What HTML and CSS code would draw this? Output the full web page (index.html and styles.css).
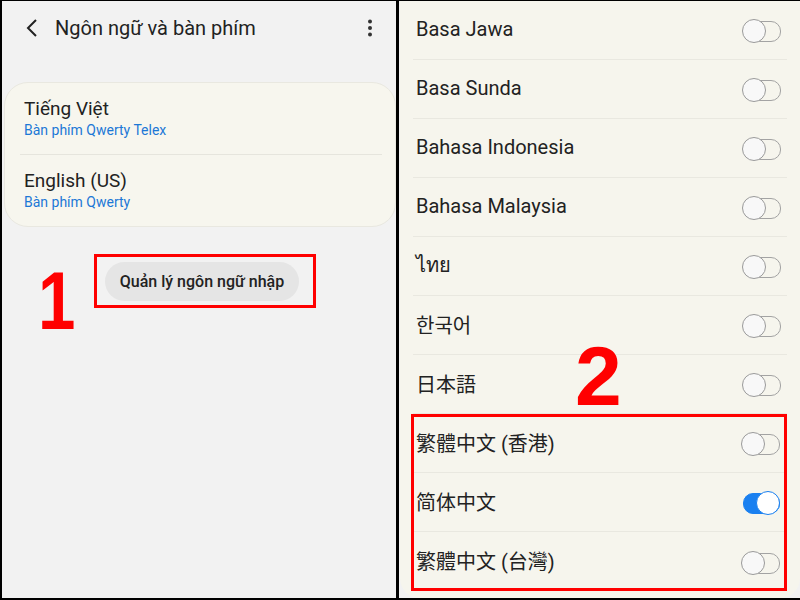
FILE: index.html
```html
<!DOCTYPE html>
<html lang="vi">

<head>
  <meta charset="UTF-8">
  <title>Ngôn ngữ và bàn phím</title>
  <link rel="stylesheet" href="styles.css">
</head>

<body>
  <div class="frame">
    <!--左边: 语言和键盘-->
    <div class="pane left">
      <div class="header">
        <svg class="back" width="12" height="20" viewBox="0 0 12 20">
          <path d="M10 2 L2 10 L10 18" fill="none" stroke="#222" stroke-width="2" />
        </svg>
        <span class="title">Ngôn ngữ và bàn phím</span>
        <svg class="more" width="6" height="18" viewBox="0 0 6 18">
          <circle cx="3" cy="2.5" r="2" fill="#333" />
          <circle cx="3" cy="9" r="2" fill="#333" />
          <circle cx="3" cy="15.5" r="2" fill="#333" />
        </svg>
      </div>
      <div class="card">
        <div class="item">
          <div class="name">Tiếng Việt</div>
          <div class="sub">Bàn phím Qwerty Telex</div>
        </div>
        <div class="item">
          <div class="name">English (US)</div>
          <div class="sub">Bàn phím Qwerty</div>
        </div>
      </div>
      <div class="step">
        <span class="num num1">1</span>
        <div class="mark">
          <span class="btn">Quản lý ngôn ngữ nhập</span>
        </div>
      </div>
    </div>

    <!--右边: 输入语言列表-->
    <div class="pane right">
      <div class="list">
        <div class="row"><span>Basa Jawa</span><i class="switch"></i></div>
        <div class="row"><span>Basa Sunda</span><i class="switch"></i></div>
        <div class="row"><span>Bahasa Indonesia</span><i class="switch"></i></div>
        <div class="row"><span>Bahasa Malaysia</span><i class="switch"></i></div>
        <div class="row"><span lang="th">ไทย</span><i class="switch"></i></div>
        <div class="row"><span lang="ko">한국어</span><i class="switch"></i></div>
        <div class="row"><span lang="ja">日本語</span><i class="switch"></i></div>
        <div class="group">
          <div class="row"><span lang="zh-HK">繁體中文 (香港)</span><i class="switch"></i></div>
          <div class="row"><span lang="zh-CN">简体中文</span><i class="switch on"></i></div>
          <div class="row"><span lang="zh-TW">繁體中文 (台灣)</span><i class="switch"></i></div>
        </div>
      </div>
      <span class="num num2">2</span>
    </div>
  </div>
</body>

</html>
```

FILE: styles.css
```css
* {
  margin: 0;
  padding: 0;
  box-sizing: border-box;
}

body {
  width: 800px;
  height: 600px;
  background-color: #000;
  font-family: Roboto, "Noto Sans", "Noto Sans CJK SC", sans-serif;
  color: #222;
  overflow: hidden;
}

.frame {
  display: flex;
  gap: 3px;
  height: 600px;
  padding: 1px 0 2px 2px;
}

.pane {
  height: 100%;
}

.left {
  width: 394px;
  background-color: #f2f2f2;
}

.right {
  flex: 1;
  position: relative;
  background-color: #f2f2f2;
  padding-left: 1px;
}

/* 顶部标题栏 */
.header {
  height: 56px;
  display: flex;
  align-items: center;
  padding: 0 0 2px 24px;
}

.header .title {
  font-size: 20px;
  margin-left: 17px;
  flex: 1;
}

.header .more {
  margin-right: 23px;
}

.card {
  margin: 25px 0 0 2px;
  background-color: #f7f6ee;
  border: 1px solid #e9e8e0;
  border-radius: 24px;
}

.item {
  margin: 0 13px 0 15px;
  padding: 14px 0 15px 4px;
}

.item + .item {
  border-top: 1px solid #e6e5dd;
}

.item .name {
  font-size: 19px;
  line-height: 24px;
}

.item .sub {
  font-size: 14px;
  line-height: 18px;
  color: #1c78d6;
}

.step {
  display: flex;
  align-items: flex-start;
  margin-top: 27px;
}

.num {
  font-family: "Liberation Sans", Arial, sans-serif;
  font-weight: bold;
  color: #ff0000;
  line-height: 1;
}

.num1 {
  display: inline-block;
  width: 46px;
  font-size: 82px;
  margin: 6px 0 0 36px;
  transform: scaleX(0.82);
  transform-origin: left top;
}

.mark {
  margin-left: 10px;
  border: 3px solid #ff0000;
  padding: 5px 14px 4px 8px;
}

.btn {
  display: block;
  width: 194px;
  height: 39px;
  line-height: 39px;
  text-align: center;
  font-size: 16px;
  font-weight: 500;
  background-color: #e5e5e5;
  border-radius: 20px;
}

/* 右边列表 */
.list {
  height: 100%;
  background-color: #f6f5ed;
  border-radius: 0 0 20px 20px;
  padding-left: 1px;
}

.row {
  height: 59px;
  margin: 0 13px 0 12px;
  padding: 0 6px 0 3px;
  display: flex;
  align-items: center;
  justify-content: space-between;
  font-size: 20px;
  border-bottom: 1px solid #e9e8e0;
}

.row span {
  padding-bottom: 2px;
}

.group {
  margin: 0 13px 0 10px;
  outline: 3px solid #ff0000;
  outline-offset: -3px;
}

.group .row {
  margin: 0 1px 0 2px;
}

.group .row:last-child {
  border-bottom: none;
}

.switch {
  position: relative;
  width: 39px;
  height: 22px;
}

.switch::before {
  content: "";
  position: absolute;
  left: 1px;
  right: 0;
  top: 2px;
  height: 19px;
  border: 1.5px solid #a3a3a3;
  border-radius: 10px;
}

.switch::after {
  content: "";
  position: absolute;
  left: 0;
  top: 0;
  width: 22px;
  height: 22px;
  background-color: #f8f8f8;
  border: 1.5px solid #9a9a9a;
  border-radius: 50%;
}

.switch.on::before {
  background-color: #1a80f0;
  border-color: #1a80f0;
  left: 2px;
}

.switch.on::after {
  left: auto;
  right: 0;
  background-color: #fff;
  border-color: #1a80f0;
}

.num2 {
  position: absolute;
  left: 176px;
  top: 333px;
  font-size: 84px;
}
```
